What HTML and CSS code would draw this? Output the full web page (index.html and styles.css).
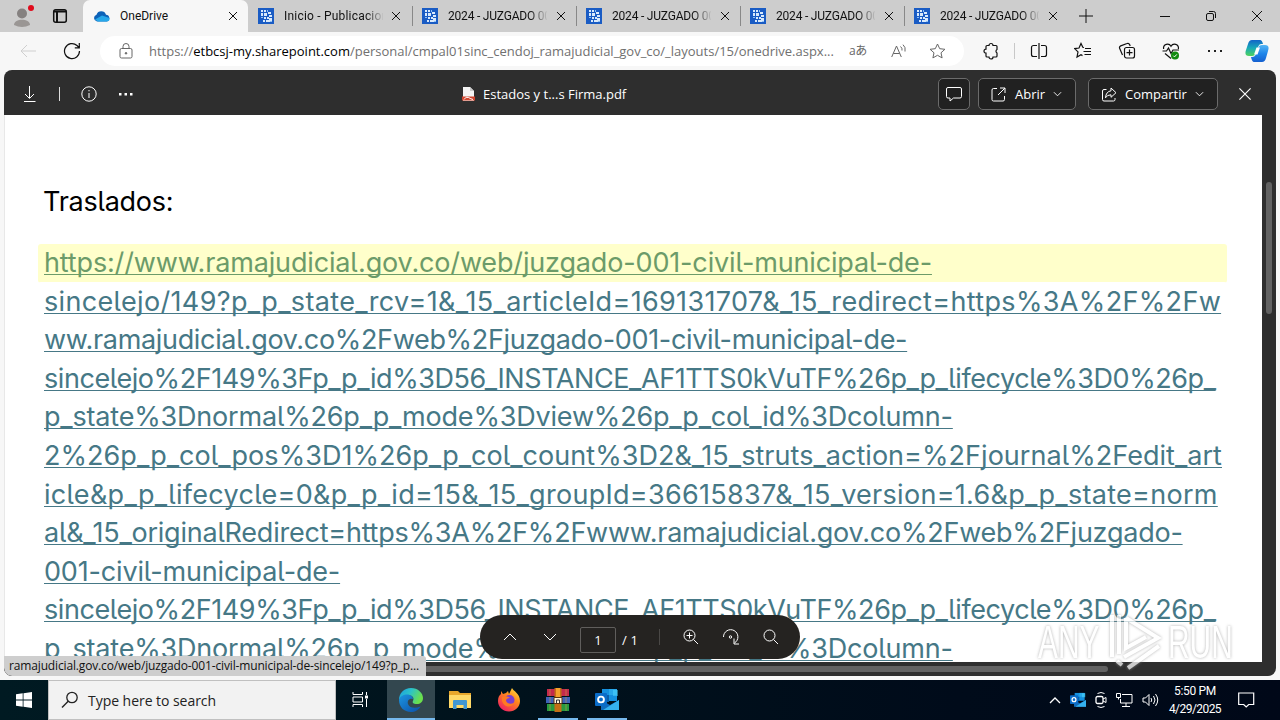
FILE: index.html
```html
<!DOCTYPE html>
<html lang="es">

<head>
    <meta charset="UTF-8">
    <meta name="viewport" content="width=device-width, initial-scale=1.0">
    <title>OneDrive</title>
    <link rel="stylesheet" href="styles.css">
</head>

<body>

    <!-- Shared icons -->
    <svg class="defs" width="0" height="0">
        <symbol id="close" viewBox="0 0 10 10">
            <path d="M1 1l8 8M9 1l-8 8" />
        </symbol>
        <symbol id="site" viewBox="0 0 16 16">
            <path fill="#1a5cc4" stroke="none" d="M0 0h16v16H0z" />
            <path fill="#d9eafc" stroke="none" d="M3 2h2v2H3zM6 2h2v2H6zM3 5h2v3H3zM6 5h3v3H6zM10 4h3v2h-3zM11 7h3v2h-3zM9 9h2v2H9zM6 9h2v2H6zM5 12h2v2H5zM8 12h3v2H8zM11 10h3v4h-3z" />
            <path fill="#8fc0f5" stroke="none" d="M9 2h1v2H9zM3 9h2v1H3zM12 13h2v1h-2z" />
        </symbol>
        <symbol id="chevron" viewBox="0 0 10 6">
            <path d="M1 1l4 4 4-4" />
        </symbol>
        <symbol id="outlook" viewBox="0 0 24 22">
            <path fill="#1490df" stroke="none" d="M7 0h15v12H7z" />
            <path fill="#28a8ea" stroke="none" d="M14 0h8v6h-8z" />
            <path fill="#0a5ea8" stroke="none" d="M7 6h7v7H7z" />
            <path fill="#50d9ff" stroke="none" d="M18 1h5v6h-5z" opacity=".5" />
            <path fill="#0f6cbd" stroke="none" d="M6 11l9 5 9-5v10H6z" />
            <path fill="#35b1ee" stroke="none" d="M24 11v10H8z" />
            <rect fill="#0a6cc8" stroke="none" y="4" width="12" height="13" rx="1" />
            <circle cx="6" cy="10.500" r="2.900" fill="none" stroke="#fff" stroke-width="1.900" />
        </symbol>
    </svg>

    <div class="tabstrip">
        <div class="profile">
            <svg width="24" height="22" viewBox="0 0 24 22">
                <circle cx="9" cy="8.500" r="5" fill="#858180" stroke="none" />
                <path d="M1 20c0-7 16-7 16 0q-8 4-16 0z" fill="#9a9694" stroke="none" />
                <circle cx="18" cy="3" r="3" fill="#e00b1c" stroke="none" />
            </svg>
        </div>
        <div class="workspaces">
            <svg width="16" height="16" viewBox="0 0 16 16">
                <rect x="1.700" y="1.700" width="12.600" height="12.600" rx="2" stroke-width="1.500" />
                <path d="M2 3.500h12M5 4v10" stroke-width="2" />
            </svg>
        </div>
        <div class="tab active">
            <svg class="favicon" width="16" height="16" viewBox="0 0 16 16">
                <path d="M3 13.500a3.500 3.500 0 0 1-.5-6.800 5 5 0 0 1 9.500 0 3.500 3.500 0 0 1 1 6.800z" fill="#0d62b8" stroke="none" />
                <path d="M4 13.500l-3-2 7-4 7.500 2.500q.5 3-2.500 3.500z" fill="#28a8ea" stroke="none" />
            </svg>
            <span class="tab-title">OneDrive</span>
            <svg class="tab-close"><use href="#close" /></svg>
        </div>
        <div class="tab first">
            <svg class="favicon"><use href="#site" /></svg>
            <span class="tab-title wide">Inicio - Publicaciones</span>
            <svg class="tab-close"><use href="#close" /></svg>
        </div>
        <div class="tab">
            <svg class="favicon"><use href="#site" /></svg>
            <span class="tab-title">2024 - JUZGADO 001</span>
            <svg class="tab-close"><use href="#close" /></svg>
        </div>
        <div class="tab">
            <svg class="favicon"><use href="#site" /></svg>
            <span class="tab-title">2024 - JUZGADO 001</span>
            <svg class="tab-close"><use href="#close" /></svg>
        </div>
        <div class="tab">
            <svg class="favicon"><use href="#site" /></svg>
            <span class="tab-title">2024 - JUZGADO 001</span>
            <svg class="tab-close"><use href="#close" /></svg>
        </div>
        <div class="tab">
            <svg class="favicon"><use href="#site" /></svg>
            <span class="tab-title">2024 - JUZGADO 001</span>
            <svg class="tab-close"><use href="#close" /></svg>
        </div>
        <div class="new-tab">
            <svg width="14" height="14" viewBox="0 0 14 14"><path d="M7 0v14M0 7h14" /></svg>
        </div>
        <div class="window-buttons">
            <svg width="10" height="10" viewBox="0 0 10 10"><path d="M0 5.500h10" /></svg>
            <svg width="10" height="10" viewBox="0 0 10 10"><rect x=".5" y="2.500" width="7" height="7" rx="1.500" /><path d="M3 .5h4.500a2 2 0 0 1 2 2V7" /></svg>
            <svg width="10" height="10" viewBox="0 0 10 10"><path d="M0 0l10 10M10 0L0 10" /></svg>
        </div>
    </div>

    <div class="toolbar">
        <svg class="back" width="16" height="14" viewBox="0 0 16 14"><path d="M16 7H1M7 1L1 7l6 6" /></svg>
        <svg class="reload" width="18" height="18" viewBox="0 0 18 18"><path d="M16.500 9A7.500 7.500 0 1 1 14 3.500L16 5.500M16.300 1v4.800h-4.500" stroke-width="1.200" /></svg>
        <div class="address">
            <svg class="lock" width="14" height="16" viewBox="0 0 14 16"><rect x="1" y="5.500" width="12" height="9.500" rx="1.500" /><path d="M4 5.500V3.500a3 3 0 0 1 6 0v2" /><circle cx="7" cy="10.300" r=".8" fill="#555" /></svg>
            <span class="url">https://<b>etbcsj-my.sharepoint.com</b>/personal/cmpal01sinc_cendoj_ramajudicial_gov_co/_layouts/15/onedrive.aspx...</span>
            <span class="translate">aあ</span>
            <svg class="read" width="16" height="14" viewBox="0 0 16 14"><path d="M.7 13L5.500 2l4.800 11M2.400 9.500h6.200M9.500 2.500q2 1.500 1.500 4M12 .7q3 2.500 2 6.800" /></svg>
            <svg class="star" width="17" height="16" viewBox="0 0 17 16"><path d="M8.500 1l2.200 4.700 5.200.6-3.900 3.500 1.100 5.100-4.600-2.600-4.600 2.600L5 9.800 1.100 6.300l5.200-.6z" /></svg>
        </div>
        <div class="tools">
            <svg width="18" height="18" viewBox="0 0 18 18"><path d="M7 3.500a2 2 0 0 1 4 0h3a1 1 0 0 1 1 1V7.500a2 2 0 0 0 0 3.500v3a1 1 0 0 1-1 1h-3a2 2 0 0 1-4 0H5a1 1 0 0 1-1-1v-2.800a2 2 0 0 1 0-4V4.500a1 1 0 0 1 1-1z" stroke-width="1.200" /></svg>
            <span class="divider"></span>
            <svg width="18" height="18" viewBox="0 0 18 18"><path d="M7 3.500H3.500a2 2 0 0 0-2 2v7a2 2 0 0 0 2 2H7M11 3.500h3.500a2 2 0 0 1 2 2v7a2 2 0 0 1-2 2H11M9 1v16" stroke-width="1.200" /></svg>
            <svg width="18" height="18" viewBox="0 0 18 18"><path d="M10 5.500L8.800 5.300 7 1.500 5 6l-4.300.6L4 9.900 3 15l4-2.200 1.500.8M11 6.500h6M9.500 9.500H17M10.500 12.500H17" stroke-width="1.200" /></svg>
            <svg width="18" height="18" viewBox="0 0 18 18"><rect x="6.500" y="5.500" width="10" height="10.500" rx="2" stroke-width="1.200" /><path d="M11.500 7.500v6M8.500 10.700h6M4.500 13L1.700 6.500a2 2 0 0 1 1-2.600L9 1.500a2 2 0 0 1 2.600 1l.6 1.500" stroke-width="1.200" /></svg>
            <svg width="18" height="18" viewBox="0 0 18 18"><path d="M1.600 7C.8 1.800 7 .6 9 4.200c2-3.600 8.200-2.400 7.400 2.800M.5 9h4l2-3 2.500 5.500L11 8h6M3 11.500l6 5" stroke-width="1.200" /><circle cx="13" cy="13.500" r="4" fill="#128a10" stroke="none" /><path d="M11.300 13.700l1.200 1.200 2.300-2.500" stroke="#fff" /></svg>
            <svg width="18" height="18" viewBox="0 0 18 18"><path fill="#222" stroke="none" d="M2 8h2v2H2zM8 8h2v2H8zM14 8h2v2h-2z" /></svg>
            <svg class="copilot" width="24" height="24" viewBox="0 0 24 24">
                <defs>
                    <linearGradient id="cp1" x1="0" y1="0" x2="0" y2="1"><stop offset="0" stop-color="#1264c8" /><stop offset=".5" stop-color="#18a9b8" /><stop offset="1" stop-color="#4fd35c" /></linearGradient>
                    <linearGradient id="cp2" x1="0" y1="0" x2="0" y2="1"><stop offset="0" stop-color="#53b5f5" /><stop offset=".5" stop-color="#1f86ea" /><stop offset="1" stop-color="#1560d0" /></linearGradient>
                </defs>
                <path d="M7 1h8q2 0 3 4h-2q-2 0-3 3l-2 6q-1 3-4 3H4q-5 0-3-6l2-6q1-4 4-4z" fill="url(#cp1)" stroke="none" />
                <path d="M17 23H9q-2 0-3-5h1q3 0 4-3l2-6q1-3 4-3h3q5 0 3 6l-2 7q-1 4-4 4z" fill="url(#cp2)" stroke="none" />
                <path d="M11.500 8.500h3.500l-2.500 7H9z" fill="#fff" stroke="none" />
            </svg>
        </div>
    </div>

    <!-- PDF viewer -->
    <div class="viewer">
        <div class="viewer-header">
            <div class="left-actions">
                <svg width="14" height="18" viewBox="0 0 14 18"><path d="M6.500 1v12M2 9l4.500 4.500L11 9M1 16.500h11.500" /></svg>
                <span class="header-divider"></span>
                <svg width="16" height="16" viewBox="0 0 16 16"><circle cx="8" cy="8" r="7.200" /><path d="M8 7v5M8 4v1.300" /></svg>
                <svg width="14" height="4" viewBox="0 0 14 4"><path fill="#fff" stroke="none" d="M0 1h2.500v2.500H0zM5.500 1H8v2.500H5.500zM11 1h2.500v2.500H11z" /></svg>
            </div>
            <div class="file-name">
                <svg width="13" height="15" viewBox="0 0 13 15"><path fill="#f4f4f4" stroke="none" d="M1 0h7l4 4v10H1z" /><path fill="#c9c9c9" stroke="none" d="M8 0l4 4H8z" /><path fill="#d0452f" stroke="none" d="M0 9.500h13v4H0z" /><path d="M2 12.500q2-3.500 4.500-2T11 12.500" stroke="#fff" /></svg>
                <span>Estados y t...s Firma.pdf</span>
            </div>
            <div class="right-actions">
                <button class="header-button comment"><svg width="18" height="16" viewBox="0 0 18 16"><path d="M3 1.500h12a1.500 1.500 0 0 1 1.500 1.500v7.500A1.500 1.500 0 0 1 15 12H8.500L5 15v-3H3a1.500 1.500 0 0 1-1.500-1.500V3A1.500 1.500 0 0 1 3 1.500z" /></svg></button>
                <button class="header-button open">
                    <svg width="15" height="15" viewBox="0 0 15 15"><path d="M6 1.500H2.500a1.500 1.500 0 0 0-1.500 1.500v9.500A1.500 1.500 0 0 0 2.500 14H12a1.500 1.500 0 0 0 1.500-1.500V9M9 1h5v5M14 1L7 8" /></svg>
                    <span>Abrir</span>
                    <svg class="down"><use href="#chevron" /></svg>
                </button>
                <button class="header-button share">
                    <svg width="16" height="15" viewBox="0 0 16 15"><path d="M5.500 2.500H3A1.500 1.500 0 0 0 1.500 4v8.500A1.500 1.500 0 0 0 3 14h9.500a1.500 1.500 0 0 0 1.500-1.500V11M10 1l5 4.700-5 4.600V7.800q-4 0-5.500 3Q5 4.500 10 3.800z" /></svg>
                    <span>Compartir</span>
                    <svg class="down"><use href="#chevron" /></svg>
                </button>
                <svg class="viewer-close"><use href="#close" /></svg>
            </div>
        </div>

        <div class="viewer-body">
            <div class="page">
                <h1 class="title">Traslados:</h1>
                <div class="link">
                    <div class="line l1">https://www.ramajudicial.gov.co/web/juzgado-001-civil-municipal-de-</div>
                    <div class="line l2">sincelejo/149?p_p_state_rcv=1&amp;_15_articleId=169131707&amp;_15_redirect=https%3A%2F%2Fw</div>
                    <div class="line l3">ww.ramajudicial.gov.co%2Fweb%2Fjuzgado-001-civil-municipal-de-</div>
                    <div class="line l4">sincelejo%2F149%3Fp_p_id%3D56_INSTANCE_AF1TTS0kVuTF%26p_p_lifecycle%3D0%26p_</div>
                    <div class="line l5">p_state%3Dnormal%26p_p_mode%3Dview%26p_p_col_id%3Dcolumn-</div>
                    <div class="line l6">2%26p_p_col_pos%3D1%26p_p_col_count%3D2&amp;_15_struts_action=%2Fjournal%2Fedit_art</div>
                    <div class="line l7">icle&amp;p_p_lifecycle=0&amp;p_p_id=15&amp;_15_groupId=36615837&amp;_15_version=1.6&amp;p_p_state=norm</div>
                    <div class="line l8">al&amp;_15_originalRedirect=https%3A%2F%2Fwww.ramajudicial.gov.co%2Fweb%2Fjuzgado-</div>
                    <div class="line l9">001-civil-municipal-de-</div>
                    <div class="line l4">sincelejo%2F149%3Fp_p_id%3D56_INSTANCE_AF1TTS0kVuTF%26p_p_lifecycle%3D0%26p_</div>
                    <div class="line l5">p_state%3Dnormal%26p_p_mode%3Dview%26p_p_col_id%3Dcolumn-</div>
                </div>
            </div>
            <div class="scroll-y"><div class="thumb-y"></div></div>
        </div>
        <div class="scroll-x"><div class="thumb-x"></div></div>

        <div class="page-controls">
            <svg class="up" width="14" height="8" viewBox="0 0 14 8"><path d="M1 7l6-6 6 6" /></svg>
            <svg class="next" width="14" height="8" viewBox="0 0 14 8"><path d="M1 1l6 6 6-6" /></svg>
            <span class="page-number">1</span>
            <span class="page-total">/ 1</span>
            <span class="controls-divider"></span>
            <svg class="zoom-in" width="16" height="16" viewBox="0 0 16 16"><circle cx="6.500" cy="6.500" r="5.500" /><path d="M10.500 10.500l4.500 4.500M6.500 3.500v6M3.500 6.500h6" /></svg>
            <svg class="rotate" width="18" height="18" viewBox="0 0 18 18"><path d="M1.500 9a7.200 7.200 0 1 1 11 6M12 10.500V16h5" /><circle cx="8.500" cy="9" r="1.200" /></svg>
            <svg class="search" width="16" height="16" viewBox="0 0 16 16"><circle cx="6.500" cy="6.500" r="5.500" /><path d="M10.500 10.500l4.500 4.500" /></svg>
        </div>

        <div class="status">ramajudicial.gov.co/web/juzgado-001-civil-municipal-de-sincelejo/149?p_p...</div>

        <div class="watermark">
            <span class="any">ANY</span>
            <svg width="56" height="62" viewBox="0 0 56 62"><path d="M4 4v42M11 4v39M18 7l32 20-34 19M18 7v30l20-11M9 50l5 4M20 57l31-22" /></svg>
            <span class="run">RUN</span>
        </div>
    </div>

    <!-- Windows taskbar -->
    <div class="taskbar">
        <div class="start">
            <svg width="16" height="16" viewBox="0 0 16 16"><path fill="#fff" stroke="none" d="M0 2.300l6.700-1v6.300H0zM7.500 1.200L16 0v7.600H7.500zM0 8.400h6.700v6.300L0 13.700zM7.500 8.400H16V16l-8.500-1.200z" /></svg>
        </div>
        <div class="searchbox">
            <svg width="18" height="18" viewBox="0 0 18 18"><circle cx="11" cy="6.500" r="5.200" stroke-width="1.300" /><path d="M7.200 10.300L1 16.500" stroke-width="1.400" /></svg>
            <span>Type here to search</span>
        </div>
        <div class="app">
            <svg width="18" height="18" viewBox="0 0 18 18"><path d="M2 1v2.500h9.500V1M2 16v-2.500h9.500V16M2 6h9.500v5H2zM15.500 1v3M15.500 8v8" /><path d="M14 4.500h3v3h-3z" fill="#fff" stroke="none" /></svg>
        </div>
        <div class="app current">
            <svg width="24" height="24" viewBox="0 0 24 24">
                <defs>
                    <linearGradient id="eg1" x1="0" y1="0" x2="1" y2=".4"><stop offset="0" stop-color="#1b9de2" /><stop offset=".5" stop-color="#2cc3c8" /><stop offset="1" stop-color="#6be04c" /></linearGradient>
                    <linearGradient id="eg2" x1="0" y1="0" x2="1" y2="1"><stop offset="0" stop-color="#1c95e0" /><stop offset="1" stop-color="#0c4fa8" /></linearGradient>
                </defs>
                <path d="M0 12C0 5 5 0 12 0s12 5 12 10c0 4-3 6-6 6-4 0-5-1.500-4-3 2-4-2-6-5-6-5 0-8 3-9 5z" fill="url(#eg1)" stroke="none" />
                <path d="M0 12c1-4 5-5.500 8-5.500 4 0 6 2.500 6 4.500-4-1-6 2-5 5 1.500 4 7 5 12.500 2.500C20 22 16 24 12 24 5 24 0 19 0 12z" fill="url(#eg2)" stroke="none" />
            </svg>
        </div>
        <div class="app">
            <svg width="22" height="20" viewBox="0 0 22 20"><path fill="#e8a72c" stroke="none" d="M0 1h9l2 2h11v5H0z" /><path fill="#ffd968" stroke="none" d="M0 5h22v13H0z" /><path fill="#3f96d3" stroke="none" d="M4 11q0-1 1-1h12q1 0 1 1v8h-3.500v-4h-7v4H4z" /></svg>
        </div>
        <div class="app">
            <svg width="24" height="24" viewBox="0 0 24 24">
                <defs>
                    <linearGradient id="ff" x1="1" y1="0" x2=".3" y2="1"><stop offset="0" stop-color="#fff04a" /><stop offset=".45" stop-color="#ff8a1c" /><stop offset="1" stop-color="#f0235f" /></linearGradient>
                </defs>
                <path d="M4 3l2 3 3-1 2-2 1 3 3-6c1 3 8 5 8 13 0 6-5 10.500-11 10.500S1 19 1 13q0-5 3-7z" fill="url(#ff)" stroke="none" />
                <circle cx="12.500" cy="12" r="5" fill="#7a3fd0" stroke="none" />
                <path d="M5 9q5-2 8 1-4 0-4 3 2 4 8 2-3 5-8 3-5-3-4-9z" fill="#ff7a22" stroke="none" />
            </svg>
        </div>
        <div class="app running">
            <svg width="24" height="24" viewBox="0 0 24 24">
                <path fill="#c42a4c" stroke="none" d="M1 1h22v7H1z" /><path fill="#3e62b8" stroke="none" d="M0 9h24v6H0z" /><path fill="#279a3f" stroke="none" d="M1 16h22v7H1z" />
                <path d="M4 1v7M20 1v7M4 9v6M20 9v6M4 16v7M20 16v7" stroke="#c99a4a" stroke-width=".6" />
                <path fill="#c46f16" stroke="none" d="M8.500 0h7v24h-7z" /><path fill="#f5a12c" stroke="none" d="M10 0h4v9h-4z" />
                <path fill="#fff3d8" stroke="#5a3510" d="M8 9.500h8v6H8z" /><path d="M10.500 15v-3h3v3" stroke="#333" />
            </svg>
        </div>
        <div class="app running">
            <svg width="24" height="22"><use href="#outlook" /></svg>
        </div>
        <div class="tray">
            <svg width="12" height="8" viewBox="0 0 12 8"><path d="M1 7l5-5 5 5" stroke-width="1.300" /></svg>
            <svg width="16" height="16" viewBox="0 0 24 22"><use href="#outlook" width="24" height="22" /></svg>
            <svg width="12" height="18" viewBox="0 0 12 18"><rect x="1" y="5.500" width="7" height="7" rx="1.500" stroke-width="1.300" /><path d="M8 8l3-1.500v5L8 10M2.500 2.500q3.500-2 7 0M2.500 15.500q3.500 2 7 0" /></svg>
            <svg width="17" height="16" viewBox="0 0 17 16"><path d="M6 2.500h10v8.500H4.500V7M10 11v3M6 14.500h8M.5 1.500h4v4h-4zM2.500 5.500v2" /></svg>
            <svg width="17" height="14" viewBox="0 0 17 14"><path d="M1 5h2.500L7 1.500v11L3.500 9H1zM9 5q1.500 2 0 4M11.500 3q3 4 0 8M13.500 1q4.500 6 0 12" /></svg>
            <div class="clock">
                <span class="time">5:50 PM</span>
                <span class="date">4/29/2025</span>
            </div>
            <svg class="notify" width="17" height="17" viewBox="0 0 17 17"><path d="M.7 1h15v11.500h-5L8.200 15l-2.500-2.500h-5z" stroke-width="1.200" /></svg>
        </div>
    </div>

</body>

</html>
```

FILE: styles.css
```css
* {
    box-sizing: border-box;
}

body {
    margin: 0;
    width: 1280px;
    height: 720px;
    overflow: hidden;
    background: #f7f7f7;
    font-family: "Open Sans", "Noto Sans", sans-serif;
    font-size: 13px;
    color: #111;
}

svg {
    display: block;
    flex-shrink: 0;
    fill: none;
    stroke: currentColor;
}

.defs {
    position: absolute;
}

/* Tab strip */
.tabstrip {
    display: flex;
    height: 32px;
    background: #cdcdcd;
}

.profile {
    width: 46px;
    padding: 5px 0 0 13px;
}

.workspaces {
    width: 37px;
    padding: 8px 0 0 6px;
}

.tab {
    display: flex;
    align-items: center;
    width: 164px;
    padding-left: 10px;
    background: linear-gradient(#888, #888) 0 50% / 1px 20px no-repeat;
}

.tab.active {
    width: 165px;
    padding-left: 11px;
    background: #f7f7f7;
    border-radius: 7px 7px 0 0;
}

.tab.first {
    background: none;
}

.favicon {
    width: 16px;
    height: 16px;
}

.tab-title {
    width: 99px;
    margin-left: 10px;
    overflow: hidden;
    white-space: nowrap;
    font-family: Roboto, sans-serif;
    font-size: 12px;
    letter-spacing: -0.2px;
}

.tab:not(.active) .tab-title {
    mask-image: linear-gradient(to right, #000 82px, transparent 100px);
}

.tab.active .tab-title {
    width: 98px;
    letter-spacing: 0;
}

.tab .tab-title.wide {
    letter-spacing: 0.2px;
}

.tab-close {
    width: 10px;
    height: 10px;
    margin-left: 9px;
}

.first .tab-close {
    margin-left: 8px;
}

.active .tab-close {
    margin-left: 10px;
}

.new-tab {
    width: 70px;
    padding: 9px 0 0 11px;
}

.window-buttons {
    display: flex;
    gap: 36px;
    margin-left: 22px;
    padding-top: 11px;
}

/* Toolbar */
.toolbar {
    display: flex;
    align-items: center;
    height: 38px;
    padding-left: 20px;
}

.back {
    color: #cfcfcf;
}

.reload {
    margin-left: 27px;
}

.address {
    display: flex;
    flex-shrink: 0;
    align-items: center;
    width: 864px;
    height: 30px;
    margin-left: 19px;
    padding-left: 19px;
    border-radius: 15px;
    background: #fff;
    color: #666;
}

.url {
    width: 700px;
    margin-left: 16px;
    white-space: nowrap;
    color: #707070;
    letter-spacing: -0.01px;
}

.url b {
    font-weight: normal;
    color: #000;
}

.translate {
    width: 20px;
    margin-top: -2px;
    font: 12px "Open Sans", "Noto Sans CJK JP", sans-serif;
    white-space: nowrap;
    letter-spacing: -0.5px;
}

.read {
    margin-left: 22px;
}

.star {
    margin-left: 22px;
}

.tools {
    display: flex;
    align-items: center;
    gap: 26px;
    margin-left: 18px;
}

.tools .divider {
    width: 1px;
    height: 16px;
    margin: 0 -11px 0 -12px;
    background: #c8c8c8;
}

.tools .copilot {
    margin-left: -5px;
}

/* PDF viewer */
.viewer {
    position: relative;
    display: flex;
    flex-direction: column;
    width: 1272px;
    height: 606px;
    margin-left: 4px;
    overflow: hidden;
    border-radius: 8px;
    background: #2e2e2e;
    color: #fff;
}

.viewer-header {
    display: flex;
    align-items: center;
    height: 45px;
    padding-top: 3px;
}

.left-actions {
    display: flex;
    align-items: center;
    width: 458px;
    padding-left: 19px;
}

.header-divider {
    width: 1px;
    height: 14px;
    margin: 0 21px 0 22px;
    background: #ddd;
}

.left-actions svg:last-child {
    margin-left: 22px;
}

.file-name {
    display: flex;
    align-items: center;
    width: 476px;
}

.file-name span {
    margin-left: 8px;
}

.right-actions {
    display: flex;
    align-items: center;
}

.header-button {
    display: flex;
    align-items: center;
    height: 32px;
    padding: 0 0 0 12px;
    border: 1px solid #6b6b6b;
    border-radius: 5px;
    background: #212121;
    color: #fff;
    font: inherit;
}

.header-button span {
    margin-left: 9px;
}

.comment {
    width: 32px;
    padding-left: 6px;
}

.open {
    width: 98px;
    margin-left: 8px;
}

.share {
    width: 130px;
    margin-left: 12px;
}

.share span {
    margin-left: 8px;
}

.down {
    width: 9px;
    height: 6px;
    margin-left: 8px;
}

.viewer-close {
    width: 14px;
    height: 14px;
    margin-left: 20px;
    stroke-width: 0.8;
}

.viewer-body {
    display: flex;
    height: 547px;
}

.page {
    width: 1258px;
    padding: 67px 0 0 34px;
    overflow: hidden;
    background: #fff;
    border-left: 1px solid #e8e8e8;
    font-family: Inter, Roboto, sans-serif;
    font-size: 27px;
    font-feature-settings: "cv05";
}

.title {
    margin: 0 0 23px 4px;
    font-size: 27px;
    font-weight: normal;
    line-height: 39px;
    letter-spacing: -0.25px;
    color: #000;
}

.line {
    height: 38.6px;
    padding-left: 5px;
    line-height: 38px;
    white-space: nowrap;
    color: #467886;
    text-decoration: underline;
    text-decoration-thickness: 1px;
    text-decoration-skip-ink: none;
    text-underline-offset: 2px;
}

/* Hovered link row */
.l1 {
    width: 1189px;
    margin-left: -1px;
    padding-left: 6px;
    box-shadow: inset 0 38px #ffffcb;
    border-radius: 3px;
    color: #6c9b69;
    letter-spacing: -0.155px;
}

.l2 {
    letter-spacing: 0.34px;
}

.l3 {
    letter-spacing: -0.33px;
}

.l4 {
    letter-spacing: -0.425px;
}

.l5 {
    letter-spacing: -0.19px;
}

.l6 {
    letter-spacing: 0.04px;
}

.l7 {
    letter-spacing: 0.29px;
}

.l8 {
    letter-spacing: -0.23px;
}

.l9 {
    letter-spacing: -0.17px;
}

.scroll-y {
    width: 14px;
    padding: 67px 0 0 4px;
}

.thumb-y {
    width: 6px;
    height: 132px;
    border-radius: 3px;
    background: #626262;
}

.scroll-x {
    padding-top: 4px;
}

.thumb-x {
    width: 1104px;
    height: 6px;
    border-radius: 3px;
    background: #626262;
}

/* Floating page controls */
.page-controls {
    position: absolute;
    left: 476px;
    top: 545px;
    display: flex;
    align-items: center;
    width: 320px;
    height: 44px;
    padding-left: 23px;
    border-radius: 22px;
    background: #252321;
}

.page-controls .next {
    margin-left: 26px;
}

.page-number {
    width: 36px;
    height: 26px;
    margin: 6px 0 0 23px;
    border: 1px solid #605e5c;
    border-radius: 2px;
    text-align: center;
    line-height: 25px;
}

.page-total {
    margin: 6px 0 0 6px;
    font-size: 13px;
    letter-spacing: 0.2px;
}

.controls-divider {
    width: 1px;
    height: 16px;
    margin-left: 21px;
    background: #4a4846;
}

.zoom-in {
    margin-left: 23px;
}

.rotate {
    margin-left: 23px;
}

.search {
    margin-left: 23px;
}

/* Link preview bubble */
.status {
    position: absolute;
    left: 0;
    top: 586px;
    width: 422px;
    height: 20px;
    padding-left: 5px;
    border-radius: 0 3px 0 8px;
    background: #cecece;
    color: #111;
    font-size: 12px;
    line-height: 19px;
    letter-spacing: -0.15px;
    white-space: nowrap;
}

.watermark {
    position: absolute;
    left: 1034px;
    top: 541px;
    display: flex;
    align-items: center;
    opacity: 0.75;
    color: #fff;
    font: 46px/62px "Liberation Sans", sans-serif;
    filter: drop-shadow(0 0 1.5px #999);
}

.watermark span {
    transform: scaleX(0.65);
    transform-origin: left;
}

.any {
    width: 70px;
}

.run {
    width: 70px;
    margin-left: 4px;
}

.watermark svg {
    stroke-width: 4;
}

/* Taskbar */
.taskbar {
    display: flex;
    height: 40px;
    margin-top: 4px;
    background: linear-gradient(to right, #001a22, #00121c 40%, #000b1a 75%, #000818);
    color: #fff;
}

.start {
    display: flex;
    align-items: center;
    justify-content: center;
    width: 48px;
}

.searchbox {
    display: flex;
    align-items: center;
    width: 288px;
    padding-left: 12px;
    border: 1px solid #c0c0c0;
    background: #f2f2f2;
    color: #222;
    font-size: 14px;
}

.searchbox span {
    margin-left: 9px;
    letter-spacing: -0.04px;
}

.app {
    display: flex;
    align-items: center;
    justify-content: center;
    width: 48px;
    margin-right: 1px;
}

.app.current {
    margin-left: 2px;
    background: #33474f;
    box-shadow: inset 0 -2px #76b9ed;
}

.app.running {
    background: linear-gradient(#76b9ed, #76b9ed) 50% 100% / 40px 2px no-repeat;
}

.tray {
    display: flex;
    align-items: center;
    gap: 9px;
    margin-left: 417px;
}

.clock {
    display: flex;
    flex-direction: column;
    align-items: center;
    width: 56px;
    margin-left: -1px;
    font: 12px/18px Roboto, sans-serif;
}

.time {
    letter-spacing: -0.3px;
}

.date {
    letter-spacing: -0.55px;
}

.notify {
    margin-left: 6px;
}
```
